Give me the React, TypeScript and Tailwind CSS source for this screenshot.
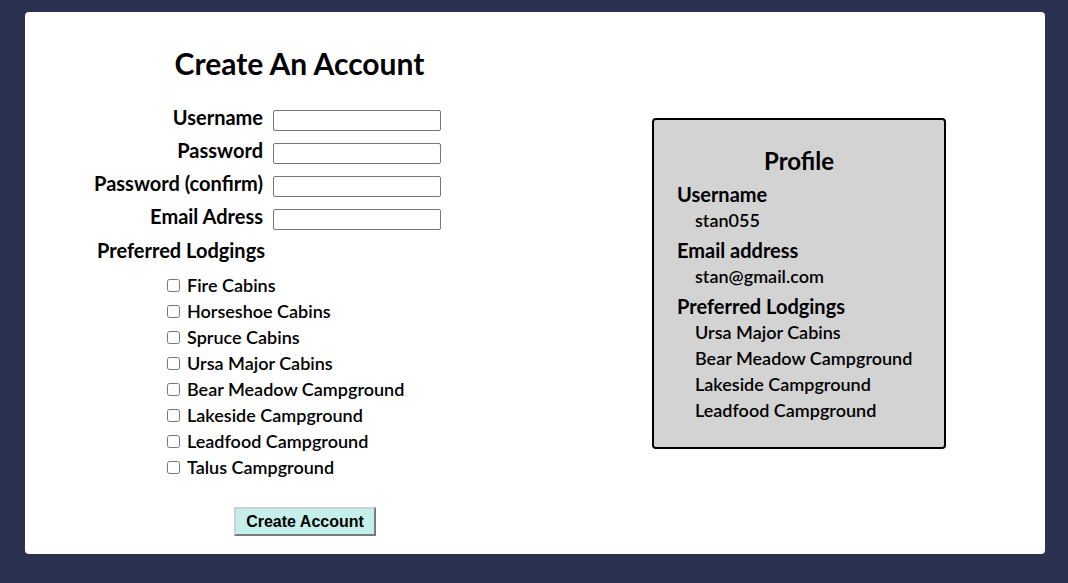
import React from "react";

const lodgings = [
  "Fire Cabins",
  "Horseshoe Cabins",
  "Spruce Cabins",
  "Ursa Major Cabins",
  "Bear Meadow Campground",
  "Lakeside Campground",
  "Leadfood Campground",
  "Talus Campground",
];

const chosen = [
  "Ursa Major Cabins",
  "Bear Meadow Campground",
  "Lakeside Campground",
  "Leadfood Campground",
];

const fields = ["Username", "Password", "Password (confirm)", "Email Adress"];

export default function App() {
  return (
    <div
      className="min-h-[583px] w-full bg-[#2b3251] px-[25px] py-[12px]"
      style={{ fontFamily: "Lato, 'Noto Sans', sans-serif" }}
    >
      <div className="flex h-[542px] w-[1020px] rounded-[4px] bg-white text-black">
        {/* Left column */}
        <div className="ml-[63px] flex w-[423px] flex-col pt-[31px]">
          <h1 className="h-[40px] text-center text-[30px] font-bold leading-[40px]">
            Create An Account
          </h1>
          <div className="mt-[27px] grid grid-cols-[175px_168px] gap-x-[10px] gap-y-[12px]">
            {fields.map((f) => (
              <React.Fragment key={f}>
                <label className="-mt-[3px] flex h-[21px] items-center justify-end whitespace-nowrap text-[20px] font-bold leading-[21px]">
                  {f}
                </label>
                <input
                  type={f.startsWith("Password") ? "password" : "text"}
                  className="h-[21px] w-[168px] rounded-[2px] border border-[#767676] bg-white px-[2px] text-[13px]"
                />
              </React.Fragment>
            ))}
          </div>
          <div className="mt-[8px] w-[177px] whitespace-nowrap text-right text-[20px] font-bold leading-[24px]">
            Preferred Lodgings
          </div>
          <div className="mt-[10px] flex flex-col pl-[79px]">
            {lodgings.map((l) => (
              <label
                key={l}
                className="flex h-[26px] items-center text-[18px] font-semibold leading-[26px]"
              >
                <input type="checkbox" className="m-0 mr-[7px] h-[13px] w-[13px]" />
                {l}
              </label>
            ))}
          </div>
          <div className="mt-[27px] pl-[146px]">
            <button
              className="h-[29px] w-[142px] border-2 border-t-[#d0d0d0] border-l-[#d0d0d0] border-r-[#7a7a7a] border-b-[#7a7a7a] bg-[#c4efea] text-[16px] font-bold leading-none"
              style={{ fontFamily: "'Liberation Sans', Arial, sans-serif" }}
            >
              Create Account
            </button>
          </div>
        </div>

        {/* Right column */}
        <div className="ml-[141px] pt-[106px]">
          <div className="h-[331px] w-[294px] rounded-[4px] border-2 border-black bg-[#d3d3d3] pl-[23px] pt-[26px]">
            <h2 className="-ml-[23px] h-[30px] text-center text-[24px] font-bold leading-[30px]">
              Profile
            </h2>
            <div className="mt-[5px] text-[20px] font-bold leading-[26px]">Username</div>
            <div className="pl-[18px] text-[18px] font-semibold leading-[26px]">stan055</div>
            <div className="mt-[4px] text-[20px] font-bold leading-[26px]">Email address</div>
            <div className="pl-[18px] text-[18px] font-semibold leading-[26px]">stan@gmail.com</div>
            <div className="mt-[4px] text-[20px] font-bold leading-[26px]">Preferred Lodgings</div>
            {chosen.map((c) => (
              <div key={c} className="pl-[18px] text-[18px] font-semibold leading-[26px]">
                {c}
              </div>
            ))}
          </div>
        </div>
      </div>
    </div>
  );
}
